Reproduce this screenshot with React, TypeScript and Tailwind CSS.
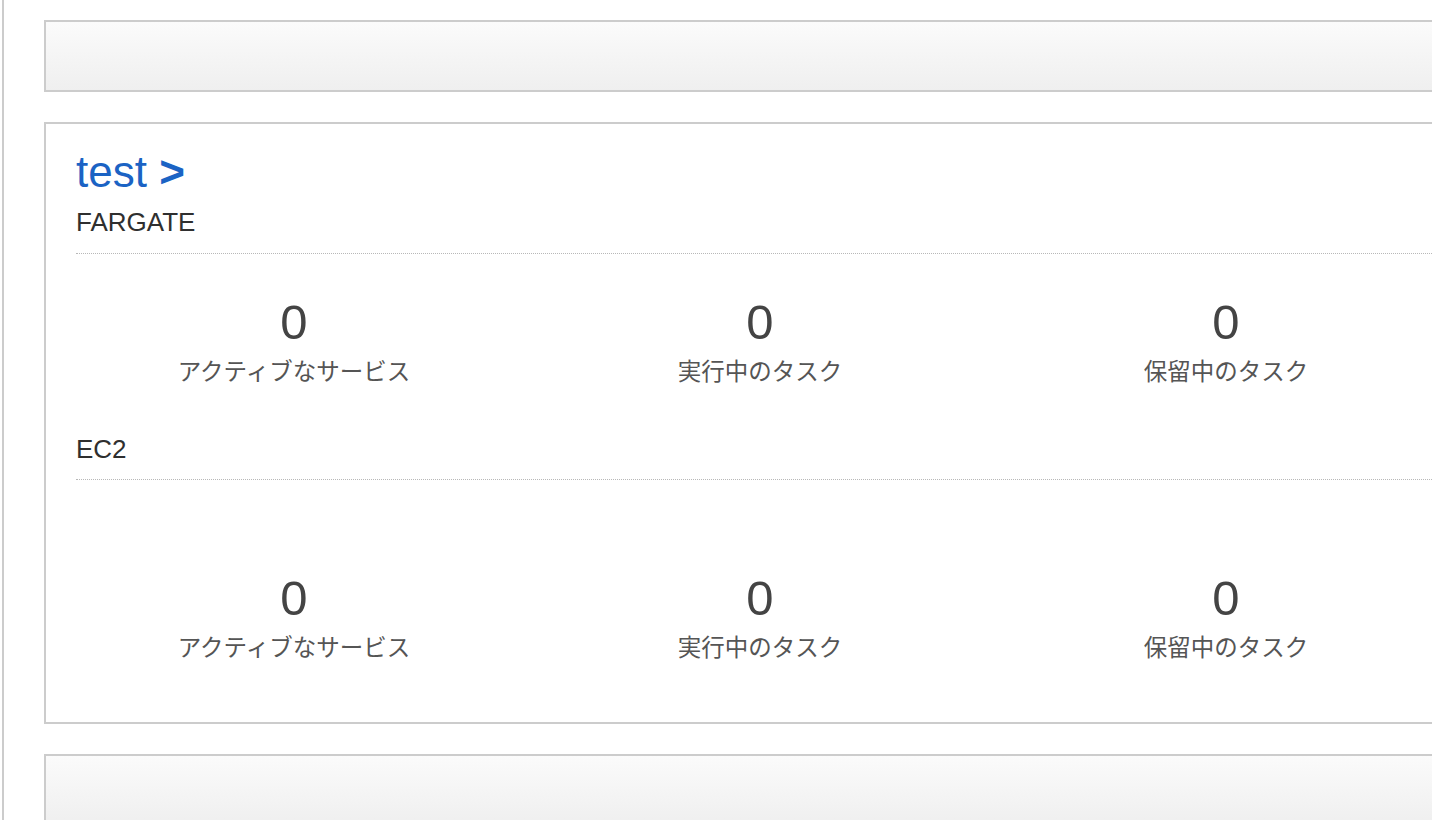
import React from "react";

const font = { fontFamily: '"Liberation Sans", Arial, "Noto Sans CJK JP", sans-serif' };

function Stat({ label, gap }: { label: string; gap: string }) {
  return (
    <div className="flex flex-col items-center px-[15px]">
      <div className="h-[56px] text-[49px] leading-[56px] text-[#444]">0</div>
      <div
        className={"h-[30px] text-[23.5px] leading-[30px] text-[#555] whitespace-nowrap " + gap}
        style={{ fontFamily: '"Noto Sans CJK JP", "Liberation Sans", sans-serif' }}
      >
        {label}
      </div>
    </div>
  );
}

function StatsRow({ className, gap }: { className: string; gap: string }) {
  return (
    <div className={"-mx-[15px] grid grid-cols-3 " + className}>
      <Stat label="アクティブなサービス" gap={gap} />
      <Stat label="実行中のタスク" gap={gap} />
      <Stat label="保留中のタスク" gap={gap} />
    </div>
  );
}

function GradientPanel() {
  return (
    <div className="h-[72px] w-[1432px] shrink-0 border-2 border-[#cccccc] bg-gradient-to-b from-[#fbfbfb] to-[#efefef]" />
  );
}

export default function App() {
  return (
    <div className="flex h-[820px] w-full overflow-hidden bg-white" style={font}>
      <div className="w-[2px] shrink-0" />
      <div className="h-full w-[2px] shrink-0 bg-[#cccccc]" />
      <div className="flex min-w-0 flex-1 flex-col gap-[30px] pl-[40px] pt-[20px]">
        <GradientPanel />
        <div className="w-[1432px] shrink-0 border-2 border-[#cccccc] bg-white px-[30px] pt-[25px] pb-[61px]">
          <div className="h-[46px] text-[44px] leading-[46px] text-[#1b63c4]">
            test <span className="font-bold">&gt;</span>
          </div>
          <div className="mt-[12px] h-[30px] text-[26px] leading-[30px] text-[#2f2f2f]">FARGATE</div>
          <div className="mt-[16px] border-t border-dotted border-[#b8b8b8]" />
          <StatsRow className="mt-[40px]" gap="mt-[5px]" />
          <div className="mt-[49px] h-[30px] text-[26px] leading-[30px] text-[#2f2f2f]">EC2</div>
          <div className="mt-[15px] border-t border-dotted border-[#b8b8b8]" />
          <StatsRow className="mt-[90px]" gap="mt-[5px]" />
        </div>
        <GradientPanel />
      </div>
    </div>
  );
}
